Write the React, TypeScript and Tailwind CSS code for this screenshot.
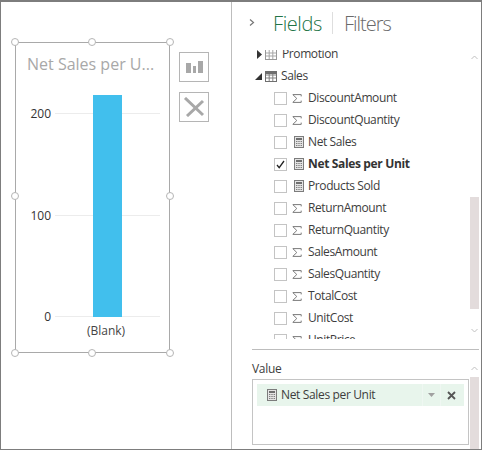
const FONT = "font-['Open_Sans','Noto_Sans',sans-serif]";

function Sigma() {
  return (
    <svg width="10" height="9" viewBox="0 0 10 9" className="shrink-0">
      <path d="M9.2 2.4V.6H.8L4.8 4.5.8 8.4H9.2V6.6" fill="none" stroke="#7a7a7a" strokeWidth="1" />
    </svg>
  );
}

function Calc() {
  return (
    <svg width="10" height="12" viewBox="0 0 10 12" className="shrink-0">
      <rect x="0.5" y="0.5" width="9" height="11" fill="#e4e4e4" stroke="#7c7c7c" />
      <rect x="2" y="2" width="6" height="2" fill="#6f6f6f" />
      <path d="M2 5.5h1.4M4.3 5.5h1.4M6.6 5.5H8M2 7.5h1.4M4.3 7.5h1.4M6.6 7.5H8M2 9.5h1.4M4.3 9.5h1.4M6.6 9.5H8" stroke="#7f7f7f" strokeWidth="1" />
    </svg>
  );
}

function TableIcon({ dark }: { dark?: boolean }) {
  const c = dark ? "#6f6f6f" : "#999";
  return (
    <svg width="12" height="11" viewBox="0 0 12 11" className="shrink-0">
      <rect x="0.5" y="0.5" width="11" height="10" fill="#fff" stroke={c} />
      {dark && <rect x="0.5" y="0.5" width="11" height="2.5" fill={c} />}
      <path d="M4.2 1v9M7.8 1v9M1 4h10M1 7h10" stroke={c} strokeWidth="1" opacity="0.85" />
    </svg>
  );
}

function Handle({ className }: { className: string }) {
  return <span className={`absolute h-2 w-2 rounded-full border border-[#b5b5b5] bg-white ${className}`} />;
}

function Row({ name, type, bold, checked }: { name: string; type: "sum" | "calc"; bold?: boolean; checked?: boolean }) {
  return (
    <div className="flex h-[22px] items-center pl-[42px]">
      <span className="flex h-[13px] w-[13px] shrink-0 items-center justify-center border border-[#c4c4c4] bg-white">
        {checked && (
          <svg width="9" height="9" viewBox="0 0 9 9">
            <path d="M1 5l2.2 2.6L8 1" fill="none" stroke="#222" strokeWidth="1.3" />
          </svg>
        )}
      </span>
      <span className={`flex w-[10px] shrink-0 justify-center ${type === "sum" ? "ml-[5px] mr-[6px]" : "ml-[7px] mr-[4px]"}`}>
        {type === "sum" ? <Sigma /> : <Calc />}
      </span>
      <span className={`whitespace-nowrap text-[12px] text-[#3d3d3d] ${bold ? "font-bold tracking-[-0.35px] text-[#333]" : "tracking-[-0.4px]"}`}>
        {name}
      </span>
    </div>
  );
}

function Chevron({ up }: { up?: boolean }) {
  return (
    <svg width="7" height="5" viewBox="0 0 7 5">
      <path d={up ? "M.5 4L3.5 1 6.5 4" : "M.5 1L3.5 4 6.5 1"} fill="none" stroke="#c0c0c0" strokeWidth="1" />
    </svg>
  );
}

export default function App() {
  return (
    <div className={`flex h-[450px] w-[482px] overflow-hidden border-x border-b border-t-2 border-[#7d7d7d] bg-white ${FONT}`}>
      {/* Canvas */}
      <div className="flex w-[230px] shrink-0 items-start pl-[14px] pt-[40px]">
        <div className="relative flex h-[311px] w-[155px] shrink-0 flex-col border border-[#a9a9a9]">
          <Handle className="-left-[5px] -top-[5px]" />
          <Handle className="left-[72px] -top-[5px]" />
          <Handle className="-right-[5px] -top-[5px]" />
          <Handle className="-left-[5px] top-[149px]" />
          <Handle className="-right-[5px] top-[149px]" />
          <Handle className="-left-[5px] -bottom-[5px]" />
          <Handle className="left-[72px] -bottom-[5px]" />
          <Handle className="-right-[5px] -bottom-[5px]" />

          <div className="ml-[11px] mt-[8px] h-[26px] whitespace-nowrap text-[16px] leading-[26px] text-[#a8a8a8]">Net Sales per U...</div>
          <div className="relative mt-[18px] h-[222px] w-full">
            {[
              { label: "200", y: 18 },
              { label: "100", y: 120 },
              { label: "0", y: 221 },
            ].map((t) => (
              <div key={t.label} className="absolute left-0 flex h-px w-full items-center" style={{ top: t.y }}>
                <span className="w-[35px] text-right text-[12px] leading-none text-[#333]">{t.label}</span>
                <span className="ml-[4px] h-px w-[105px] bg-[#ececec]" />
              </div>
            ))}
            <div className="absolute left-[77px] top-0 h-[222px] w-[29px] bg-[#41bfed]" />
          </div>
          <div className="ml-[69px] mt-[5px] w-[42px] whitespace-nowrap text-center text-[12px] leading-[18px] text-[#444]">(Blank)</div>
        </div>

        <div className="ml-[9px] flex flex-col gap-[10px] pt-[10px]">
          <div className="flex h-[30px] w-[30px] items-center justify-center border border-[#b5b5b5]">
            <svg width="17" height="12" viewBox="0 0 17 12">
              <path d="M0 2h5v10H0zM7 5h3v7H7zM12 0h5v12h-5z" fill="#a8a8a8" />
            </svg>
          </div>
          <div className="flex h-[30px] w-[30px] items-center justify-center border border-[#b5b5b5]">
            <svg width="22" height="20" viewBox="0 0 22 20">
              <path d="M2 1l18 17M20 4L4 19" stroke="#a8a8a8" strokeWidth="3" fill="none" />
            </svg>
          </div>
        </div>
      </div>

      {/* Field pane */}
      <div className="flex w-[250px] shrink-0 flex-col border-l border-[#bdbdbd]">
        <div className="flex h-[48px] shrink-0 items-start pl-[17px] pt-[8px]">
          <svg width="6" height="7" viewBox="0 0 6 7" className="mt-[9px]">
            <path d="M1 .5L4.5 3.5 1 6.5" fill="none" stroke="#777" strokeWidth="1.2" />
          </svg>
          <span className="ml-[18px] text-[20px] font-light leading-[28px] tracking-[-0.4px] text-[#217346]">Fields</span>
          <span className="ml-[10px] mt-[2px] h-[22px] w-px self-start bg-[#dedede]" />
          <span className="ml-[11px] text-[20px] font-light leading-[28px] tracking-[-1px] text-[#6a6a6a]">Filters</span>
        </div>

        <div className="relative h-[289px] shrink-0 overflow-hidden">
          <div className="-mt-[7px]">
            <div className="flex h-[22px] items-center pl-[25px]">
              <svg width="5" height="9" viewBox="0 0 5 9" className="shrink-0"><path d="M0 0l5 4.5L0 9z" fill="#333" /></svg>
              <span className="ml-[3px]"><TableIcon /></span>
              <span className="ml-[5px] text-[12px] tracking-[-0.4px] text-[#3d3d3d]">Promotion</span>
            </div>
            <div className="flex h-[22px] items-center pl-[23px]">
              <svg width="7" height="7" viewBox="0 0 7 7" className="shrink-0"><path d="M7 0v7H0z" fill="#333" /></svg>
              <span className="ml-[3px]"><TableIcon dark /></span>
              <span className="ml-[4px] text-[12px] tracking-[-0.4px] text-[#3d3d3d]">Sales</span>
            </div>
            <Row name="DiscountAmount" type="sum" />
            <Row name="DiscountQuantity" type="sum" />
            <Row name="Net Sales" type="calc" />
            <Row name="Net Sales per Unit" type="calc" bold checked />
            <Row name="Products Sold" type="calc" />
            <Row name="ReturnAmount" type="sum" />
            <Row name="ReturnQuantity" type="sum" />
            <Row name="SalesAmount" type="sum" />
            <Row name="SalesQuantity" type="sum" />
            <Row name="TotalCost" type="sum" />
            <Row name="UnitCost" type="sum" />
            <Row name="UnitPrice" type="sum" />
          </div>
          <div className="absolute right-[2px] top-0 flex h-full w-[9px] flex-col items-center">
            <div className="mt-[5px]"><Chevron up /></div>
            <div className="mt-[137px] h-[112px] w-[9px] bg-[#e3dcdc]" />
            <div className="mt-[19px]"><Chevron /></div>
          </div>
        </div>

        <div className="ml-[20px] mr-[2px] mt-[10px] h-px shrink-0 bg-[#bdbdbd]" />

        <div className="flex min-h-0 flex-1">
          <div className="ml-[20px] w-[217px] shrink-0">
            <div className="mt-[10px] h-[19px] text-[12px] leading-[17px] tracking-[-0.3px] text-[#3d3d3d]">Value</div>
            <div className="h-[66px] border border-[#c4c4c4] p-[4px]">
              <div className="flex h-[22px] items-center bg-[#e8f5ec] pl-[10px]">
                <Calc />
                <span className="ml-[4px] w-[141px] whitespace-nowrap text-[12px] tracking-[-0.35px] text-[#3d3d3d]">Net Sales per Unit</span>
                <span className="flex h-full w-[18px] items-center justify-center border-l border-[#eff7f2]">
                  <svg width="7" height="4" viewBox="0 0 7 4"><path d="M0 0h7L3.5 4z" fill="#a0a0a0" /></svg>
                </span>
                <span className="flex h-full w-[21px] items-center justify-center border-l border-[#eff7f2]">
                  <svg width="9" height="9" viewBox="0 0 9 9"><path d="M1 1l7 7M8 1L1 8" stroke="#555" strokeWidth="1.8" /></svg>
                </span>
              </div>
            </div>
          </div>
          <div className="ml-[1px] flex w-[9px] flex-col items-center">
            <div className="mt-[16px]"><Chevron up /></div>
            <div className="mt-[6px] w-[9px] flex-1 bg-[#e3dcdc]" />
          </div>
        </div>
      </div>
    </div>
  );
}
